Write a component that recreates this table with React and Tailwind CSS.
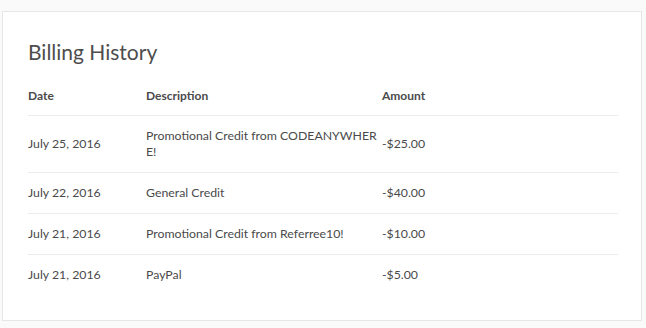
import React from "react";

const rows = [
  { date: "July 25, 2016", desc: ["Promotional Credit from CODEANYWHER", "E!"], amount: "-$25.00" },
  { date: "July 22, 2016", desc: ["General Credit"], amount: "-$40.00" },
  { date: "July 21, 2016", desc: ["Promotional Credit from Referree10!"], amount: "-$10.00" },
  { date: "July 21, 2016", desc: ["PayPal"], amount: "-$5.00" },
];

export default function App() {
  return (
    <div
      className="w-[646px] h-[328px] bg-[#fafafa] pt-[11px] pl-[2px]"
      style={{ fontFamily: "Lato, 'Open Sans', Arial, sans-serif" }}
    >
      <div className="w-[640px] h-[310px] bg-white border border-[#e6e6e6] pl-[25px] pr-[23px] pt-[26px]">
        <h1 className="text-[21px] leading-[28px] font-normal text-[#4d4d4d]">Billing History</h1>
        <table className="w-[590px] mt-[22px] border-collapse text-[12.3px] leading-4 text-[#4a4a4a] table-fixed">
          <colgroup>
            <col className="w-[118px]" />
            <col className="w-[236px]" />
            <col />
          </colgroup>
          <thead>
            <tr className="border-b border-[#ececec]">
              <th className="text-left font-bold text-[12px] pb-[11px] align-top">Date</th>
              <th className="text-left font-bold text-[12px] pb-[11px] align-top">Description</th>
              <th className="text-left font-bold text-[12px] pb-[11px] align-top">Amount</th>
            </tr>
          </thead>
          <tbody>
            {rows.map((r, i) => (
              <tr key={i} className={i < rows.length - 1 ? "border-b border-[#ececec]" : ""}>
                <td className="py-3 align-middle">{r.date}</td>
                <td className="py-3 align-middle">
                  {r.desc.map((d, j) => (
                    <div key={j}>{d}</div>
                  ))}
                </td>
                <td className="py-3 align-middle">{r.amount}</td>
              </tr>
            ))}
          </tbody>
        </table>
      </div>
    </div>
  );
}
